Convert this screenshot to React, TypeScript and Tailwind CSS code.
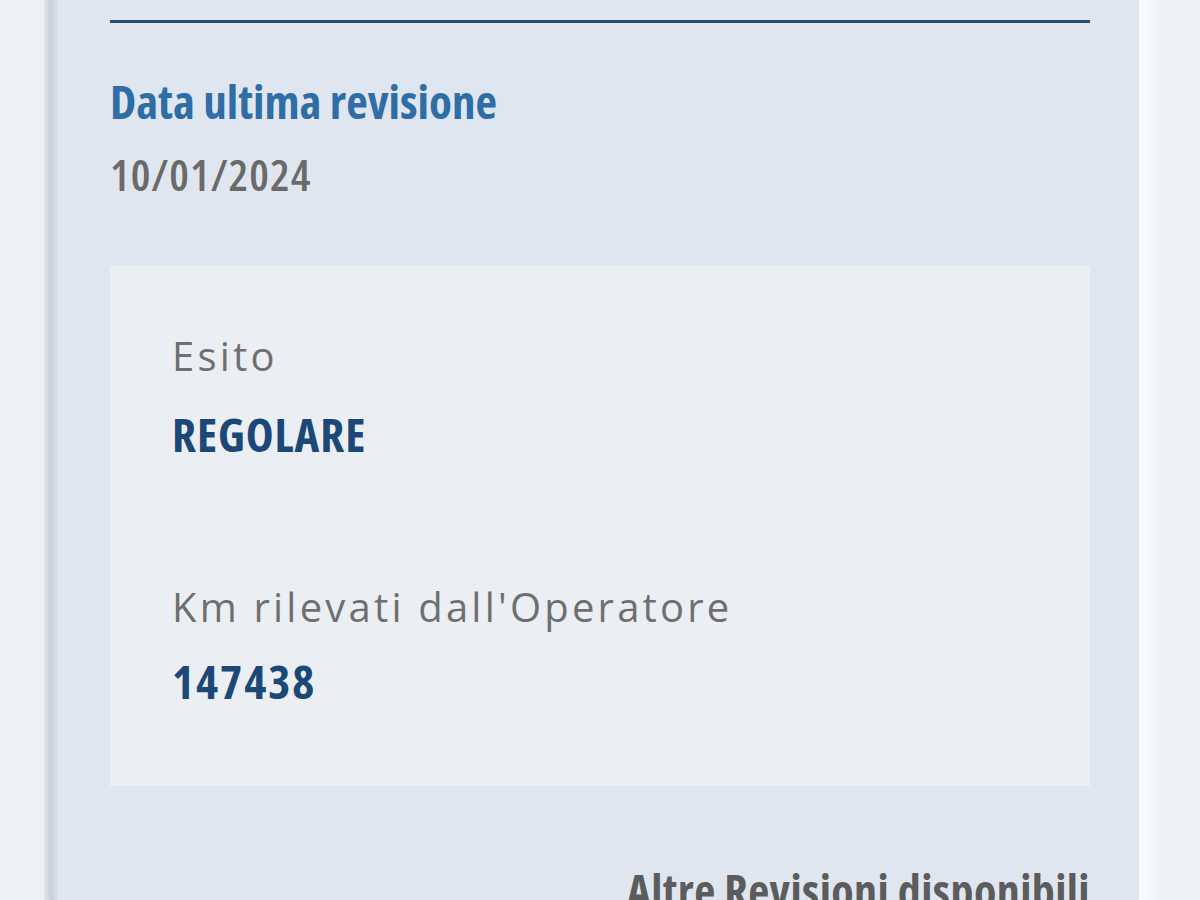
import React from 'react';

const sans = { fontFamily: '"Open Sans", "Noto Sans", sans-serif' };

const Field: React.FC<{ label: string; value: string; first?: boolean; numeric?: boolean }> = ({
  label,
  value,
  first,
  numeric,
}) => (
  <div className={first ? '' : 'mt-[129px]'}>
    <div className="text-[40px] leading-none text-[#6f6f6f] tracking-[0.08em]" style={sans}>
      {label}
    </div>
    <div
      className={`${first ? 'mt-[35px]' : 'mt-[31px]'} text-[47px] leading-none font-bold text-[#1c4877] [font-stretch:75%] ${
        numeric ? 'tracking-[2px]' : 'tracking-[0.9px]'
      }`}
      style={sans}
    >
      {value}
    </div>
  </div>
);

export default function App() {
  return (
    <div className="w-full h-[900px] overflow-hidden flex bg-[#eef1f4]">
      <div className="w-[44px] shrink-0" />
      {/* left shadow of the card */}
      <div className="w-[14px] shrink-0 bg-gradient-to-r from-[#e3e7ec] via-[#c7ced6] to-[#dbe2eb]" />
      <div className="w-[1081px] shrink-0 bg-[#dfe6ef] pt-[20px] pl-[52px] pr-[49px]">
        <div className="h-[3px] bg-[#2d4b6b]" />

        <h2
          className="mt-[55px] text-[47px] leading-none font-bold text-[#2e6da6] [font-stretch:75%]"
          style={sans}
        >
          Data ultima revisione
        </h2>
        <div
          className="mt-[27px] text-[44px] leading-none font-semibold text-[#6a6a6a] [font-stretch:75%] tracking-[1px]"
          style={sans}
        >
          10/01/2024
        </div>

        <div className="mt-[70px] bg-[#ebeff3] pl-[62px] pt-[70px] pb-[81px]">
          <Field label="Esito" value="REGOLARE" first />
          <Field label="Km rilevati dall'Operatore" value="147438" numeric />
        </div>

        <div
          className="mt-[81px] text-right text-[46px] leading-none font-bold text-[#5c5c5c] [font-stretch:75%] tracking-[0.4px]"
          style={sans}
        >
          Altre Revisioni disponibili
        </div>
      </div>
      <div className="w-[20px] shrink-0 bg-gradient-to-r from-[#fbfcfc] to-[#f1f4f6]" />
    </div>
  );
}
